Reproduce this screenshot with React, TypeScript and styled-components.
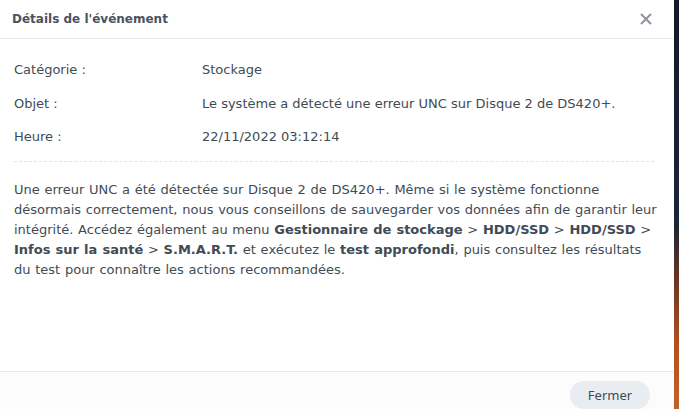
import React from 'react'
import { styled, createGlobalStyle } from 'styled-components'

const GlobalStyle = createGlobalStyle`
    html, body {
        margin: 0;
        padding: 0;
        height: 100%;
    }
    body {
        background: linear-gradient(180deg, #121a26 0%, #1b2636 55%, #6a3422 68%, #b2531f 85%, #c0622a 100%);
        font-family: "DejaVu Sans", Verdana, sans-serif;
        overflow: hidden;
    }
`

const Dialog = styled.div`
    width: 674px;
    height: 409px;
    background: #ffffff;
    display: flex;
    flex-direction: column;
    color: #414b55;
`

const Header = styled.div`
    height: 38px;
    flex-shrink: 0;
    display: flex;
    align-items: center;
    justify-content: space-between;
    padding: 0 22px 0 12px;
    border-bottom: 1px solid #e6e8eb;
`

const Title = styled.div`
    font-size: 12px;
    font-weight: bold;
    color: #4a545e;
`

const CloseButton = styled.button`
    border: none;
    background: none;
    padding: 0;
    width: 12px;
    height: 12px;
    display: flex;
    cursor: pointer;
`

const Body = styled.div`
    flex: 1;
    padding: 21px 20px 0 14px;
    font-size: 13px;
`

const InfoRow = styled.div`
    display: grid;
    grid-template-columns: 188px 1fr;
    height: 20px;
    line-height: 20px;
    margin-bottom: 13.5px;
    white-space: nowrap;
`

const Divider = styled.div`
    border-top: 1px dashed #e2e4e7;
    margin: 7px 0 18px;
`

const Description = styled.p`
    margin: 0;
    line-height: 20.2px;
    word-spacing: 0.6px;
    white-space: nowrap;
    b {
        font-weight: bold;
    }
`

const Footer = styled.div`
    height: 38px;
    flex-shrink: 0;
    border-top: 1px solid #e6e8eb;
    background: #fcfcfc;
    display: flex;
    justify-content: flex-end;
    padding: 9px 24px 0 0;
    box-sizing: border-box;
`

const FooterButton = styled.button`
    width: 80px;
    height: 28px;
    border: none;
    border-radius: 14px;
    background: #e9edf2;
    color: #414b55;
    font-family: "Noto Sans", "DejaVu Sans", sans-serif;
    font-size: 13px;
    cursor: pointer;
`

const rows = [
    { label: 'Catégorie :', value: 'Stockage' },
    { label: 'Objet :', value: 'Le système a détecté une erreur UNC sur Disque 2 de DS420+.' },
    { label: 'Heure :', value: '22/11/2022 03:12:14' },
]

const App: React.FC = () => {
    return (
        <>
            <GlobalStyle />
            <Dialog>
                <Header>
                    <Title>Détails de l'événement</Title>
                    <CloseButton aria-label="Fermer">
                        <svg width="12" height="12" viewBox="0 0 12 12">
                            <path d="M1 1L11 11M11 1L1 11" stroke="#8d949c" strokeWidth="2" />
                        </svg>
                    </CloseButton>
                </Header>
                <Body>
                    {rows.map((row) => (
                        <InfoRow key={row.label}>
                            <span>{row.label}</span>
                            <span>{row.value}</span>
                        </InfoRow>
                    ))}
                    <Divider />
                    <Description>
                        Une erreur UNC a été détectée sur Disque 2 de DS420+. Même si le système fonctionne<br />
                        désormais correctement, nous vous conseillons de sauvegarder vos données afin de garantir leur<br />
                        intégrité. Accédez également au menu <b>Gestionnaire de stockage</b> &gt; <b>HDD/SSD</b> &gt; <b>HDD/SSD</b> &gt;<br />
                        <b>Infos sur la santé</b> &gt; <b>S.M.A.R.T.</b> et exécutez le <b>test approfondi</b>, puis consultez les résultats<br />
                        du test pour connaître les actions recommandées.
                    </Description>
                </Body>
                <Footer>
                    <FooterButton>Fermer</FooterButton>
                </Footer>
            </Dialog>
        </>
    )
}

export default App
